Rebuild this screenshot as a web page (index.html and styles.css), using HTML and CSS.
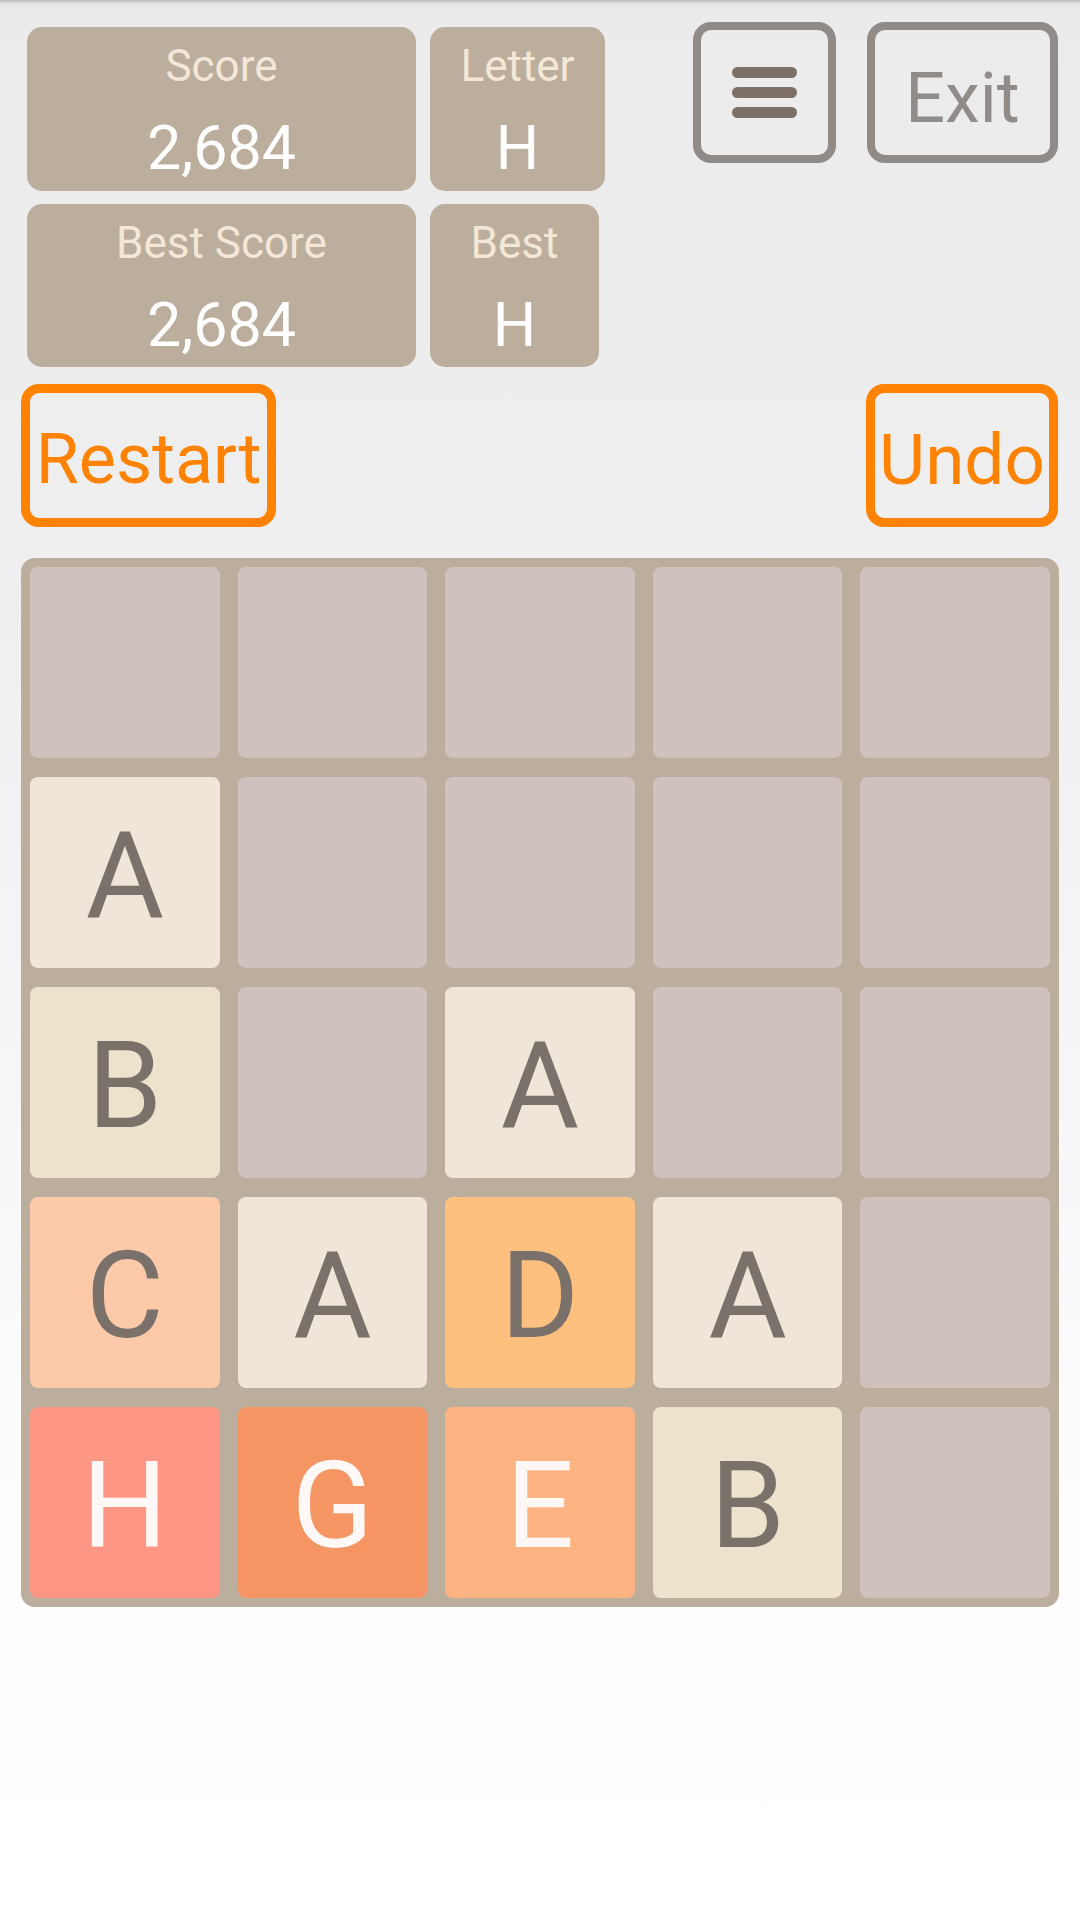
FILE: index.html
```html
<!DOCTYPE html>
<html>
<head>
<meta charset="utf-8">
<link rel="stylesheet" href="styles.css">
</head>
<body>
<div class="page">
  <div class="header">
    <div class="stats">
      <div class="stat-row">
        <div class="stat wide"><div class="label">Score</div><div class="value">2,684</div></div>
        <div class="stat narrow"><div class="label">Letter</div><div class="value">H</div></div>
      </div>
      <div class="stat-row">
        <div class="stat wide"><div class="label">Best Score</div><div class="value">2,684</div></div>
        <div class="stat narrow2"><div class="label">Best</div><div class="value">H</div></div>
      </div>
    </div>
    <div class="top-buttons">
      <div class="btn-gray menu"><span class="bar"></span><span class="bar"></span><span class="bar"></span></div>
      <div class="btn-gray exit">Exit</div>
    </div>
  </div>
  <div class="actions">
    <div class="btn-orange restart">Restart</div>
    <div class="btn-orange undo">Undo</div>
  </div>
  <div class="board">
    <div class="tile"></div><div class="tile"></div><div class="tile"></div><div class="tile"></div><div class="tile"></div>
    <div class="tile t-a">A</div><div class="tile"></div><div class="tile"></div><div class="tile"></div><div class="tile"></div>
    <div class="tile t-b">B</div><div class="tile"></div><div class="tile t-a">A</div><div class="tile"></div><div class="tile"></div>
    <div class="tile t-c">C</div><div class="tile t-a">A</div><div class="tile t-d">D</div><div class="tile t-a">A</div><div class="tile"></div>
    <div class="tile t-h">H</div><div class="tile t-g">G</div><div class="tile t-e">E</div><div class="tile t-b">B</div><div class="tile"></div>
  </div>
</div>
</body>
</html>
```

FILE: styles.css
```css
html, body {
  margin: 0;
  padding: 0;
}
body {
  width: 1080px;
  height: 1920px;
  font-family: Roboto, "Noto Sans", sans-serif;
  background: linear-gradient(to bottom, #b9b9b9 0px, #e6e6e6 4px, #ebebeb 10px, #f0f0f2 700px, #fdfdfe 1500px, #ffffff 1920px);
  overflow: hidden;
}
.page {
  padding: 0 21px 0 21px;
}
.header {
  display: flex;
  justify-content: space-between;
  align-items: flex-start;
  height: 367px;
}
.stats {
  margin-top: 27px;
  margin-left: 6px;
  display: flex;
  flex-direction: column;
  gap: 13px;
}
.stat-row {
  display: flex;
  gap: 14px;
}
.stat {
  background: #bcae9d;
  border-radius: 15px;
  height: 164px;
  box-sizing: border-box;
  padding-top: 11px;
  text-align: center;
}
.stat-row + .stat-row .stat {
  height: 163px;
}
.wide { width: 389px; }
.narrow { width: 175px; }
.narrow2 { width: 169px; }
.label {
  font-size: 44px;
  line-height: 56px;
  color: #f3e7d7;
}
.value {
  margin-top: 18px;
  font-size: 61px;
  line-height: 72px;
  color: #ffffff;
}
.top-buttons {
  margin-top: 22px;
  display: flex;
  gap: 31px;
  margin-right: 1px;
}
.btn-gray {
  box-sizing: border-box;
  height: 141px;
  border: 8px solid #908b86;
  border-radius: 18px;
  display: flex;
  align-items: center;
  justify-content: center;
}
.menu {
  width: 143px;
  flex-direction: column;
  gap: 9px;
}
.bar {
  display: block;
  width: 65px;
  height: 11px;
  border-radius: 6px;
  background: #7d7068;
}
.exit {
  width: 191px;
  font-size: 70px;
  line-height: 70px;
  color: #918c87;
  padding-top: 10px;
}
.actions {
  margin-top: 17px;
  display: flex;
  justify-content: space-between;
  margin-right: 1px;
}
.btn-orange {
  box-sizing: border-box;
  height: 143px;
  border: 9px solid #ff8200;
  border-radius: 18px;
  display: flex;
  align-items: center;
  justify-content: center;
  font-size: 71px;
  line-height: 71px;
  color: #ff8200;
  padding-top: 8px;
}
.restart { width: 255px; font-size: 70px; }
.undo { width: 192px; }
.board {
  margin-top: 31px;
  width: 1038px;
  height: 1049px;
  box-sizing: border-box;
  padding: 9px;
  background: #bcae9c;
  border-radius: 14px;
  display: grid;
  grid-template-columns: repeat(5, 1fr);
  grid-template-rows: repeat(5, 1fr);
  column-gap: 18px;
  row-gap: 19px;
}
.tile {
  background: #cfc2be;
  border-radius: 8px;
  display: flex;
  align-items: center;
  justify-content: center;
  font-size: 120px;
  line-height: 120px;
  padding-top: 6px;
  box-sizing: border-box;
  color: #79716a;
}
.t-a { background: #efe5d8; }
.t-b { background: #ede2cc; }
.t-c { background: #fdcaa9; }
.t-d { background: #fec07e; }
.t-e { background: #feb382; color: #fff8f6; }
.t-g { background: #f69564; color: #fff8f6; }
.t-h { background: #fe9685; color: #fff8f6; }
```
